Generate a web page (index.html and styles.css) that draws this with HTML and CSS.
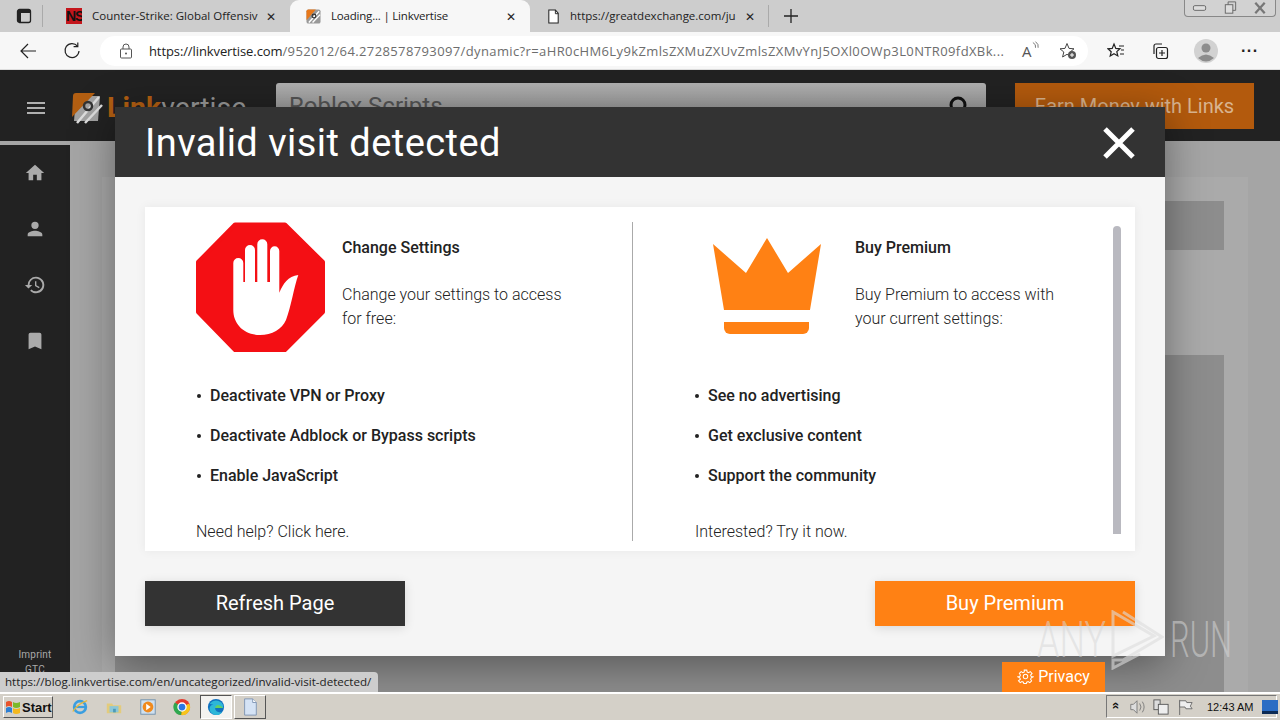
FILE: index.html
```html
<!DOCTYPE html>
<html lang="en">
<head>
<meta charset="utf-8">
<title>Loading... | Linkvertise</title>
<link rel="stylesheet" href="styles.css">
</head>
<body>
<div class="tabstrip">
  <svg class="tabs-btn" viewBox="0 0 16 16"><rect x="1.5" y="1.5" width="13" height="13" rx="2" fill="none" stroke="#222" stroke-width="1.3"/><rect x="2" y="2" width="12" height="3" fill="#222"/><rect x="2" y="5" width="3" height="9" fill="#222"/></svg>
  <span class="strip-sep"></span>
  <div class="tab tab-one">
    <span class="fav-ns">NS</span>
    <span class="tab-title">Counter-Strike: Global Offensiv</span>
    <span class="tab-x">✕</span>
  </div>
  <div class="tab tab-active">
    <svg class="fav" viewBox="0 0 32 32"><rect x="1" y="1" width="30" height="30" rx="4" fill="#999"/><path d="M1 24V5q0-4 4-4h16z" fill="#e8781a"/><path d="M6 29 28 5M14 29 30 12" stroke="#fff" stroke-width="3"/><circle cx="17" cy="15" r="4" fill="none" stroke="#333" stroke-width="2.5"/></svg>
    <span class="tab-title">Loading... | Linkvertise</span>
    <span class="tab-x">✕</span>
  </div>
  <div class="tab tab-three">
    <svg class="fav" viewBox="0 0 16 16"><path d="M3 1h7l3 3.5V15H3z" fill="#fff" stroke="#222" stroke-width="1.1"/><path d="M10 1v4h3" fill="none" stroke="#222"/></svg>
    <span class="tab-title">https://greatdexchange.com/ju</span>
    <span class="tab-x">✕</span>
  </div>
  <span class="strip-sep"></span>
  <svg class="new-tab" viewBox="0 0 16 16"><path d="M8 1v14M1 8h14" stroke="#222" stroke-width="1.3"/></svg>
  <div class="win-controls">
    <svg viewBox="0 0 30 17"><rect x="8" y="6" width="13" height="5" rx="1.5" fill="#ddd" stroke="#666"/></svg>
    <svg viewBox="0 0 30 17"><rect x="10" y="5" width="8" height="9" fill="#ddd" stroke="#666"/><path d="M13 5V2h8v9h-3" fill="none" stroke="#666"/></svg>
    <svg viewBox="0 0 30 17"><path d="M10 3l10 11M20 3 10 14" stroke="#777" stroke-width="2.4"/></svg>
  </div>
</div>

<div class="toolbar">
  <svg class="tb-back" viewBox="0 0 18 18"><path d="M17 9H2M9 2 2 9l7 7" fill="none" stroke="#222" stroke-width="1.2"/></svg>
  <svg class="tb-reload" viewBox="0 0 18 18"><path d="M14.5 4.2A7 7 0 1 0 16 9" fill="none" stroke="#222" stroke-width="1.2"/><path d="M14.8 0.5v4.2h-4.2" fill="none" stroke="#222" stroke-width="1.2"/></svg>
  <div class="urlbar">
    <svg class="lock" viewBox="0 0 14 16"><rect x="1.5" y="6" width="11" height="9" rx="1" fill="none" stroke="#555"/><path d="M4 6V4a3 3 0 0 1 6 0v2" fill="none" stroke="#555"/><circle cx="7" cy="10.5" r="1" fill="#555"/></svg>
    <div class="url"><span class="url-host">https://linkvertise.com</span>/952012/64.2728578793097/dynamic?r=aHR0cHM6Ly9kZmlsZXMuZXUvZmlsZXMvYnJ5OXl0OWp3L0NTR09fdXBk...</div>
    <span class="read-aloud">A<svg viewBox="0 0 8 10"><path d="M1 1q4 2 3 6M4 0q4 3 3 7" fill="none" stroke="#555" stroke-width=".9"/></svg></span>
    <svg class="addfav" viewBox="0 0 18 18"><path d="M8 1.5 10 6.4l5 .4-3.8 3.2 1.2 5-4.4-2.7-4.4 2.7 1.2-5L1 6.800l5-.4z" fill="none" stroke="#444"/><circle cx="13" cy="13" r="4" fill="#555"/><path d="M13 11v4M11 13h4" stroke="#fff"/></svg>
  </div>
  <svg class="tb-ico tb-favs" viewBox="0 0 18 18"><path d="M7 2 8.800 6.400l4.200.4-3.200 2.800 1 4.300L7 11.700 3.200 14l1-4.300L1 6.800l4.200-.4z" fill="none" stroke="#222" stroke-width="1.2"/><path d="M12 4h5M14 8h3M13 12h4" stroke="#222"/></svg>
  <svg class="tb-ico tb-coll" viewBox="0 0 18 18"><rect x="5.500" y="5.500" width="11" height="11" rx="2" fill="none" stroke="#222" stroke-width="1.200"/><path d="M11 8v6M8 11h6M3 12V4a2 2 0 0 1 2-2h6" fill="none" stroke="#222" stroke-width="1.200"/></svg>
  <svg class="tb-profile" viewBox="0 0 24 24"><circle cx="12" cy="12" r="12" fill="#d2d2d2"/><circle cx="12" cy="9" r="4.500" fill="#8c8c8c"/><path d="M4 19q8-7 16 0-8 7-16 0" fill="#8c8c8c"/></svg>
  <span class="tb-more">···</span>
</div>

<div class="page">
  <header class="site-head">
    <span class="burger"><i></i><i></i><i></i></span>
    <svg class="logo" viewBox="0 0 32 32"><path d="M5 4h24l-2 25H3z" fill="#a3a3a3"/><path d="M1 25 2 4q0-3 3-3h19z" fill="#b35f12"/><path d="M6 31 28 5M14 31 31 13" stroke="#ddd" stroke-width="2.500"/><circle cx="17" cy="14" r="4" fill="none" stroke="#333" stroke-width="2.500"/></svg>
    <span class="brand"><b>Link</b>vertise</span>
    <div class="search">
      <span>Roblox Scripts</span>
      <svg viewBox="0 0 22 22"><circle cx="10" cy="10" r="7" fill="none" stroke="#111" stroke-width="3"/><path d="M15 15l6 6" stroke="#111" stroke-width="3"/></svg>
    </div>
    <div class="earn">Earn Money with Links</div>
  </header>
  <div class="site-body">
    <aside class="side">
      <nav class="side-nav">
        <svg viewBox="0 0 24 24"><path d="M10 20v-6h4v6h5v-8h3L12 3 2 12h3v8z"/></svg>
        <svg viewBox="0 0 24 24"><path d="M12 12a4 4 0 1 0 0-8 4 4 0 0 0 0 8zm0 2c-2.700 0-8 1.300-8 4v2h16v-2c0-2.700-5.300-4-8-4z"/></svg>
        <svg viewBox="0 0 24 24"><path d="M13 3a9 9 0 0 0-9 9H1l3.900 3.900L9 12H6a7 7 0 1 1 2.100 4.900l-1.400 1.400A9 9 0 1 0 13 3zm-1 5v5l4.300 2.500.7-1.200-3.500-2.100V8z"/></svg>
        <svg viewBox="0 0 24 24"><path d="M17 3H7a2 2 0 0 0-2 2v16l7-3 7 3V5a2 2 0 0 0-2-2z"/></svg>
      </nav>
      <div class="side-links"><span>Imprint</span><span>GTC</span></div>
    </aside>
    <main class="site-main">
      <div class="site-card">
        <div class="block block-a"></div>
        <div class="block block-b"></div>
      </div>
    </main>
  </div>

  <section class="modal">
    <div class="modal-head">
      <h1>Invalid visit detected</h1>
      <svg class="modal-close" viewBox="0 0 32 32"><path d="M2 2l28 28M30 2 2 30" stroke="#fff" stroke-width="5"/></svg>
    </div>
    <div class="modal-body">
      <div class="panel">
        <div class="col col-left">
          <div class="col-top">
            <svg class="stop" viewBox="0 0 130 130"><polygon points="39,2.500 89,2.500 127,40 127,90 89,128 39,128 2,90 2,40" fill="#f40f14" stroke="#f40f14" stroke-width="4" stroke-linejoin="round"/><path d="M37.300 41a5 5 0 0 1 10 0V60h1.700V28a5 5 0 0 1 10 0V60h2.300V22.300a5 5 0 0 1 10 0V60h2.700V29a4.650 4.650 0 0 1 9.300 0V70.700C87 62 92 54 102.300 53 98 65 95 85 90 98 86 107 76 113 64 113 48 113 37.300 102 37.300 88z" fill="#fff"/></svg>
            <div class="col-text">
              <h2>Change Settings</h2>
              <p>Change your settings to access<br>for free:</p>
            </div>
          </div>
          <ul>
            <li>Deactivate VPN or Proxy</li>
            <li>Deactivate Adblock or Bypass scripts</li>
            <li>Enable JavaScript</li>
          </ul>
          <p class="foot">Need help? Click here.</p>
        </div>
        <div class="col col-right">
          <div class="col-top">
            <div class="crown-box">
              <svg class="crown" viewBox="0 0 108 96"><path d="M0 6 33 35 54 0 75 35 108 6 97 72H11z" fill="#ff8114"/><path d="M11 84H96V90a6 6 0 0 1-6 6H17a6 6 0 0 1-6-6z" fill="#ff8114"/></svg>
            </div>
            <div class="col-text">
              <h2>Buy Premium</h2>
              <p>Buy Premium to access with<br>your current settings:</p>
            </div>
          </div>
          <ul>
            <li>See no advertising</li>
            <li>Get exclusive content</li>
            <li>Support the community</li>
          </ul>
          <p class="foot">Interested? Try it now.</p>
        </div>
        <span class="scroll-thumb"></span>
      </div>
      <div class="actions">
        <a class="btn btn-dark">Refresh Page</a>
        <a class="btn btn-orange">Buy Premium</a>
      </div>
    </div>
  </section>

  <div class="status-url">https://blog.linkvertise.com/en/uncategorized/invalid-visit-detected/</div>
  <div class="privacy">
    <svg viewBox="0 0 24 24"><path d="M12 8.500a3.500 3.500 0 1 0 0 7 3.500 3.500 0 0 0 0-7zM10 2h4l.6 3 2.300 1 2.600-1.600 2.800 2.800L20 9.800l1 2.200 3 .6v0l-3 1.400-1 2.200 1.600 2.600-2.800 2.800-2.600-1.600-2.300 1-.6 2h-4l-.6-2-2.300-1-2.600 1.600-2.800-2.800L4 16.200 3 14l-3-1.400v0l3-.6 1-2.200L2.400 7.200l2.800-2.800L7.800 6l2.300-1z" fill="none" stroke="#fff" stroke-width="1.600" transform="translate(1.200 1.200) scale(.9)"/></svg>
    <span>Privacy</span>
  </div>
  <div class="watermark">
    <span class="wm-word wm-any">ANY</span>
    <svg viewBox="0 0 54 60"><path d="M3 2V46L44 26z" fill="none" stroke="#ddd" stroke-width="3"/><path d="M13 2 52 27 13 50H3V58L30 44" fill="none" stroke="#ddd" stroke-width="3"/></svg>
    <span class="wm-word wm-run">RUN</span>
  </div>
</div>

<footer class="taskbar">
  <div class="start">
    <svg viewBox="0 0 16 16"><path d="M1 3q3-2 6 0v5q-3-2-6 0z" fill="#e8532b"/><path d="M8 3q3 2 7 0v5q-4 2-7 0z" fill="#7cb928"/><path d="M1 9q3-2 6 0v5q-3-2-6 0z" fill="#2d7fd3"/><path d="M8 9q3 2 7 0v5q-4 2-7 0z" fill="#f3b81e"/></svg>
    <b>Start</b>
  </div>
  <div class="quick">
    <span class="qbtn"><svg viewBox="0 0 20 20"><circle cx="10" cy="10" r="6.500" fill="none" stroke="#3a9ee0" stroke-width="3"/><path d="M4 10h12" stroke="#3a9ee0" stroke-width="2.500"/><path d="M2 15Q8 6 18 3" fill="none" stroke="#e6b93c" stroke-width="1.500"/></svg></span>
    <span class="qbtn"><svg viewBox="0 0 20 20"><path d="M2 6h6l1 2h9v9H2z" fill="#e3cb7c"/><rect x="5" y="9" width="10" height="7" fill="#8cc7d8"/><path d="M9 16v-4h3v4" fill="#4c9ab8"/></svg></span>
    <span class="qbtn"><svg viewBox="0 0 20 20"><rect x="2" y="2" width="16" height="16" fill="#cfe0ef" stroke="#6d8eaa"/><circle cx="10" cy="10" r="6" fill="#f08a1d"/><path d="M8 6.500v7l5-3.500z" fill="#fff"/></svg></span>
    <span class="qbtn"><svg viewBox="0 0 20 20"><circle cx="10" cy="10" r="9" fill="#e33b2e"/><path d="M10 10 18 6A9 9 0 0 1 9 19z" fill="#f7c51b"/><path d="M10 10 9 19A9 9 0 0 1 2 5z" fill="#2fa84f"/><circle cx="10" cy="10" r="4.500" fill="#2b78e4" stroke="#fff" stroke-width="1.500"/></svg></span>
    <span class="qbtn qbtn-on"><svg viewBox="0 0 20 20"><circle cx="10" cy="10" r="9" fill="#1172c0"/><path d="M3 6Q9 0 16 5q3 3 2 6H9q0 5 8 5-3 3-7 3-6-1-7-6-1-4 4-6-3 0-4-1z" fill="#2db7d8"/><path d="M11 8q3-1 7 3H9q0-2 2-3z" fill="#65d05f"/></svg></span>
    <span class="qbtn qbtn-up"><svg viewBox="0 0 20 20"><path d="M4 1h9l4 4v14H4z" fill="#d5e3f5" stroke="#7d93b3"/><path d="M13 1v4h4" fill="#fff" stroke="#7d93b3"/></svg></span>
  </div>
  <div class="tray">
    <b class="tray-chev">«</b>
    <svg viewBox="0 0 18 18"><path d="M2 6h3l4-4v14l-4-4H2z" fill="#ddd" stroke="#777"/><path d="M12 5q3 4 0 8M15 3q4 6 0 12" fill="none" stroke="#777"/></svg>
    <svg viewBox="0 0 18 18"><rect x="1" y="1" width="7" height="11" fill="#ddd" stroke="#555"/><rect x="6" y="6" width="11" height="11" fill="#eee" stroke="#555"/></svg>
    <svg viewBox="0 0 18 18"><path d="M3 1v17" stroke="#666"/><path d="M3 2h7l1 2h6l-2 4 2 3h-7l-1-2H3z" fill="#eee" stroke="#666"/></svg>
    <span class="clock">12:43 AM</span>
    <svg class="tray-desk" viewBox="0 0 16 14"><rect width="16" height="14" fill="#2a6cc4"/><rect y="11" width="16" height="3" fill="#0d2b55"/></svg>
  </div>
</footer>
</body>
</html>
```
FILE: styles.css
```css
* { box-sizing: border-box; }
html, body { margin: 0; height: 720px; overflow: hidden; }
body { display: flex; flex-direction: column; width: 1280px; font-family: Roboto, "Liberation Sans", sans-serif; background: #a5a5a5; }

/* browser tab strip */
.tabstrip { height: 32px; background: #cdcdcd; display: flex; align-items: center; flex: none; position: relative; }
.tabs-btn { width: 16px; height: 16px; margin-left: 16px; flex: none; }
.strip-sep { width: 1px; height: 22px; background: #aaa; flex: none; }
.tabstrip > .strip-sep:nth-of-type(1) { margin-left: 10px; }
.tab { height: 32px; display: flex; align-items: center; font: 11.5px "Open Sans", "Noto Sans", sans-serif; color: #222; flex: none; }
.tab-one { width: 224px; margin-left: 23px; padding-right: 13px; }
.tab-active { width: 240px; background: #f7f7f7; border-radius: 9px 9px 0 0; padding: 0 14px 0 16px; }
.tab-three { width: 238px; padding: 0 13px 0 16px; }
.fav-ns { width: 16px; height: 16px; background: #c4161c; color: #111; font: bold 14px/16px "Liberation Sans", sans-serif; flex: none; overflow: hidden; text-align: center; letter-spacing: -1px; }
.tab-one .tab-title { flex: none; width: 166px; margin-left: 10px; }
.tab-one .tab-x { margin-left: 8px; }
.fav { width: 15px; height: 15px; flex: none; }
.tab-title { flex: 1; white-space: nowrap; overflow: hidden; margin: 0 0 2px 10px; }
.tab-active .tab-title { letter-spacing: -.2px; }
.tab-three .tab-title { margin-left: 9px; }
.tab-x { font-size: 12px; color: #222; flex: none; }
.new-tab { width: 16px; height: 16px; margin-left: 14px; flex: none; }
.win-controls { position: absolute; right: 4px; top: 0; width: 92px; height: 17px; display: flex; border: 1px solid #888; border-top: 0; border-radius: 0 0 4px 4px; background: #d2d2d2; }
.win-controls svg { flex: 1; height: 16px; min-width: 0; }

/* browser toolbar */
.toolbar { height: 38px; background: #f7f7f7; border-bottom: 1px solid #ddd; display: flex; align-items: center; flex: none; }
.tb-back { width: 18px; height: 18px; margin-left: 19px; flex: none; }
.tb-reload { width: 18px; height: 18px; margin-left: 26px; flex: none; }
.urlbar { width: 988px; height: 30px; margin-left: 19px; background: #fff; border-radius: 15px; display: flex; align-items: center; flex: none; }
.lock { width: 14px; height: 16px; margin-left: 19px; flex: none; }
.url { width: 860px; margin-left: 16px; font: 13px "Open Sans", "Noto Sans", sans-serif; letter-spacing: .38px; color: #6d6d6d; white-space: nowrap; overflow: hidden; flex: none; }
.url-host { color: #222; letter-spacing: -.1px; }
.read-aloud { margin-left: 13px; font: 15px "Open Sans", sans-serif; color: #555; display: flex; flex: none; }
.read-aloud svg { width: 7px; height: 10px; }
.addfav { width: 18px; height: 18px; margin-left: 20px; flex: none; }
.tb-ico { width: 18px; height: 18px; flex: none; }
.tb-favs { margin-left: 19px; }
.tb-coll { margin-left: 26px; }
.tb-profile { width: 24px; height: 24px; margin-left: 25px; flex: none; }
.tb-more { margin-left: 23px; font: bold 16px "Liberation Sans", sans-serif; color: #222; letter-spacing: .5px; flex: none; }

/* page */
.page { flex: 1; position: relative; display: flex; flex-direction: column; overflow: hidden; min-height: 0; }
.site-head { height: 71px; background: #222; display: flex; align-items: flex-start; flex: none; }
.burger { width: 18px; margin: 32px 0 0 27px; display: flex; flex-direction: column; gap: 3px; flex: none; }
.burger i { height: 2px; background: #b0b0b0; }
.logo { width: 32px; height: 32px; margin: 22px 0 0 26px; flex: none; }
.brand { width: 173px; margin-top: 21px; padding-left: 4px; font-size: 28.5px; line-height: 34px; color: #999; flex: none; white-space: nowrap; }
.brand b { color: #b35f12; font-weight: 700; }
.search { width: 710px; height: 50px; margin-top: 13px; background: linear-gradient(#b0b0b0, #888); border-radius: 3px; display: flex; justify-content: space-between; padding: 9px 16px 0 13px; flex: none; }
.search span { font-size: 24px; line-height: 28px; color: #555; }
.search svg { width: 22px; height: 22px; margin-top: 3px; }
.earn { width: 239px; height: 46px; margin: 13px 0 0 29px; background: #b35a0d; color: #d9b48f; font-size: 20px; line-height: 46px; text-align: center; flex: none; }
.site-body { flex: 1; display: flex; min-height: 0; }
.side { width: 70px; margin-top: 4px; background: #222; color: #aaa; display: flex; flex-direction: column; justify-content: space-between; flex: none; }
.side-nav { display: flex; flex-direction: column; align-items: center; gap: 34px; padding-top: 17px; }
.side-nav svg { width: 22px; height: 22px; fill: #aaa; }
.side-links { display: flex; flex-direction: column; align-items: center; font-size: 10px; line-height: 15px; padding-bottom: 15px; letter-spacing: .2px; }
.site-main { flex: 1; padding: 36px 32px 0; background: #a5a5a5; }
.site-card { height: 100%; background: #aaa; padding: 24px 24px 0 13px; display: flex; flex-direction: column; gap: 105px; }
.block { background: #8d8d8d; }
.block-a { height: 49px; }
.block-b { flex: 1; }

/* modal */
.modal { position: absolute; left: 115px; top: 37px; width: 1050px; height: 549px; display: flex; flex-direction: column; box-shadow: 0 8px 40px rgba(0,0,0,.4); }
.modal-head { height: 70px; background: #333; display: flex; align-items: center; justify-content: space-between; padding: 2px 30px 0 30px; flex: none; }
.modal-head h1 { margin: 0; color: #fff; font-size: 38px; font-weight: 400; letter-spacing: .46px; }
.modal-close { width: 32px; height: 32px; }
.modal-body { flex: 1; background: #f5f5f5; padding: 30px; display: flex; flex-direction: column; }
.panel { height: 344px; background: #fff; box-shadow: 0 0 10px rgba(0,0,0,.06); padding: 15px 0 10px; display: flex; position: relative; flex: none; }
.col { font-size: 16px; color: #222; }
.col-left { width: 488px; padding-left: 51px; border-right: 1px solid #aaa; }
.col-right { flex: 1; padding-left: 62px; }
.col-top { display: flex; height: 130px; }
.stop { width: 130px; height: 130px; flex: none; margin-right: 16px; }
.crown-box { width: 144px; margin-right: 16px; display: flex; justify-content: center; padding-top: 16px; flex: none; }
.crown { width: 108px; height: 96px; }
.col-text { padding-top: 14px; }
h2 { margin: 0; font-size: 16px; line-height: 24px; font-weight: 500; }
.col-text p { margin: 23px 0 0; line-height: 24px; font-weight: 300; }
ul { list-style: none; margin: 23px 0 0; padding: 0; }
li { height: 40px; line-height: 42px; font-weight: 500; padding-left: 14px; position: relative; }
li::before { content: ""; position: absolute; left: 1px; top: 19px; width: 4px; height: 4px; border-radius: 50%; background: #222; }
.col-right ul { margin-left: -1px; }
.foot { margin: 27px 0 0; line-height: 20px; font-weight: 300; }
.scroll-thumb { position: absolute; left: 968px; top: 19px; width: 8px; height: 308px; background: #b9b9c0; border-radius: 4px 4px 0 0; }
.actions { display: flex; justify-content: space-between; margin-top: 30px; }
.btn { width: 260px; height: 45px; font-size: 20px; line-height: 45px; text-align: center; color: #fff; box-shadow: 0 2px 10px rgba(0,0,0,.12); }
.btn-dark { background: #333; }
.btn-orange { background: #ff8114; }

/* overlays */
.status-url { position: absolute; left: 0; bottom: 0; width: 378px; height: 20px; background: #cdcdcd; border-radius: 0 4px 0 0; padding-left: 5px; font: 11.6px/20px "Open Sans", "Noto Sans", sans-serif; color: #222; white-space: nowrap; }
.privacy { position: absolute; left: 1002px; bottom: 0; width: 103px; height: 30px; padding-bottom: 1px; background: #ff8114; color: #fff; font-size: 16px; display: flex; align-items: center; justify-content: center; gap: 4px; }
.privacy svg { width: 17px; height: 17px; }
.watermark { position: absolute; left: 1037px; top: 540px; width: 194px; height: 60px; display: flex; align-items: center; color: rgba(215,215,215,.55); font: 300 50px/60px Roboto, sans-serif; }
.wm-word { transform-origin: left center; white-space: nowrap; flex: none; }
.wm-any { width: 73px; transform: scaleX(.72); }
.wm-run { width: 61px; transform: scaleX(.62); }
.watermark svg { width: 54px; height: 60px; opacity: .6; flex: none; margin-right: 6px; }

/* taskbar */
.taskbar { height: 28px; background: #d4d0c8; border-top: 2px solid #fff; display: flex; align-items: center; flex: none; position: relative; }
.start { width: 50px; height: 22px; margin-left: 3px; display: flex; align-items: center; gap: 1px; padding-left: 1px; background: #d4d0c8; border: 1px solid; border-color: #fff #555 #555 #fff; font: bold 13px "Liberation Sans", sans-serif; color: #111; flex: none; }
.start svg { width: 16px; height: 16px; }
.quick { display: flex; margin-left: 11px; gap: 2px; }
.qbtn { width: 32px; height: 24px; display: flex; align-items: center; justify-content: center; }
.qbtn svg { width: 18px; height: 18px; }
.qbtn-on { background: #f4f3f0; border: 1px solid; border-color: #555 #fff #fff #555; }
.qbtn-up { border: 1px solid; border-color: #fff #555 #555 #fff; }
.tray { position: absolute; right: 3px; top: 1px; width: 171px; height: 23px; border: 1px solid; border-color: #777 #fff #fff #777; display: flex; align-items: center; padding-left: 4px; font: 11px "Liberation Sans", sans-serif; color: #111; }
.tray svg { width: 16px; height: 16px; margin-left: 8px; flex: none; }
.tray-chev { transform: rotate(90deg); font-size: 13px; line-height: 12px; width: 10px; flex: none; }
.clock { margin-left: 14px; flex: none; }
.tray .tray-desk { margin-left: 9px; }
```
